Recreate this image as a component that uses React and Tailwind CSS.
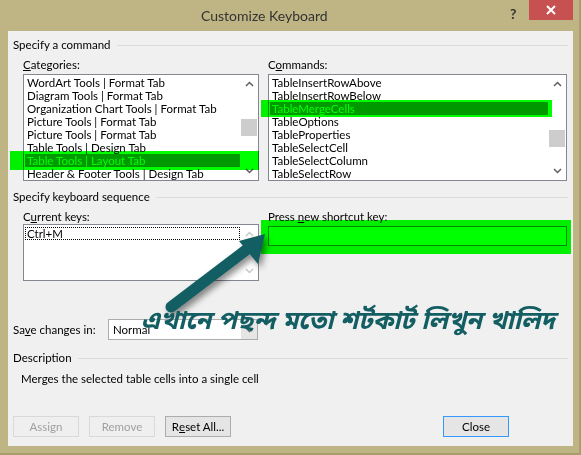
import React from 'react';

const font = { fontFamily: 'Lato, "Noto Sans", sans-serif' };

const categories = [
  'WordArt Tools | Format Tab',
  'Diagram Tools | Format Tab',
  'Organization Chart Tools | Format Tab',
  'Picture Tools | Format Tab',
  'Picture Tools | Format Tab',
  'Table Tools | Design Tab',
  'Table Tools | Layout Tab',
  'Header & Footer Tools | Design Tab',
];

const commands = [
  'TableInsertRowAbove',
  'TableInsertRowBelow',
  'TableMergeCells',
  'TableOptions',
  'TableProperties',
  'TableSelectCell',
  'TableSelectColumn',
  'TableSelectRow',
];

function Chevron({ up, disabled }) {
  return (
    <svg width="9" height="6" viewBox="0 0 9 6" className="block">
      <polyline
        points={up ? '1,5 4.5,1.5 8,5' : '1,1 4.5,4.5 8,1'}
        fill="none"
        stroke={disabled ? '#c8c8c8' : '#606060'}
        strokeWidth="1.5"
      />
    </svg>
  );
}

function Scrollbar({ thumbTop, disabled }) {
  return (
    <div className="flex w-[17px] flex-col items-center justify-between bg-white py-[6px]">
      <Chevron up disabled={disabled} />
      {thumbTop != null && (
        <div className="relative w-full flex-1">
          <div
            className="absolute left-0 h-[17px] w-[16px] bg-[#cdcdcd]"
            style={{ top: thumbTop }}
          />
        </div>
      )}
      <Chevron disabled={disabled} />
    </div>
  );
}

function ListBox({ items, selected, thumbTop, className }) {
  return (
    <div className={`flex h-[107px] border border-[#828790] bg-white ${className}`}>
      <div className="flex-1 overflow-hidden px-[1px] pt-[1px]">
        {items.map((t, i) => (
          <div
            key={i}
            className={`h-[13px] whitespace-nowrap pl-[2px] text-[11.5px] leading-[13px] ${
              i === selected ? 'bg-[#3399ff] text-white' : 'text-black'
            }`}
          >
            {t}
          </div>
        ))}
      </div>
      <Scrollbar thumbTop={thumbTop} />
    </div>
  );
}

function GroupHeader({ children }) {
  return (
    <div className="flex h-[14px] items-center gap-[6px] pl-[5px] pr-[5px]">
      <span className="whitespace-nowrap text-[11.5px] leading-[14px] text-black">{children}</span>
      <div className="h-px flex-1 bg-[#dcdcdc]" />
    </div>
  );
}

function Btn({ children, disabled, def }) {
  return (
    <div
      className={`flex h-[21px] w-[66px] items-center justify-center border text-[11.5px] ${
        disabled
          ? 'border-[#d9d9d9] bg-[#efefef] text-[#a0a0a0]'
          : def
          ? 'border-[#3399ff] bg-[#e5e5e5] text-black'
          : 'border-[#adadad] bg-[#e5e5e5] text-black'
      }`}
    >
      {children}
    </div>
  );
}

export default function App() {
  return (
    <div
      className="relative flex h-[455px] w-[581px] flex-col overflow-hidden border-r-2 border-b-2 border-[#a89e6c] bg-[#bfb483]"
      style={font}
    >
      {/* title bar */}
      <div className="relative flex h-[31px] items-center pl-[201px]">
        <span className="text-[14px] text-[#333333]">Customize Keyboard</span>
        <span className="absolute left-[510px] top-[3px] text-[14px] font-bold text-[#333]">?</span>
        <div className="absolute left-[529px] top-0 flex h-[20px] w-[44px] items-center justify-center bg-[#c75050]">
          <svg width="10" height="10" viewBox="0 0 10 10">
            <path d="M1 1 L9 9 M9 1 L1 9" stroke="white" strokeWidth="2" />
          </svg>
        </div>
      </div>

      {/* content */}
      <div className="ml-[8px] flex h-[415px] w-[565px] flex-col bg-[#f0f0f0] pt-[7px]">
        <GroupHeader>Specify a command</GroupHeader>

        <div className="mt-[6px] flex gap-[9px] pl-[15px]">
          <div className="flex w-[236px] flex-col">
            <div className="h-[14px] text-[11.5px] leading-[14px]">
              <u>C</u>ategories:
            </div>
            <ListBox className="mt-[2px]" items={categories} selected={6} thumbTop={32} />
          </div>
          <div className="flex w-[299px] flex-col">
            <div className="h-[14px] text-[11.5px] leading-[14px]">
              C<u>o</u>mmands:
            </div>
            <ListBox className="mt-[2px]" items={commands} selected={2} thumbTop={43} />
          </div>
        </div>

        <div className="mt-[9px]">
          <GroupHeader>Specify keyboard sequence</GroupHeader>
        </div>

        <div className="mt-[6px] flex gap-[9px] pl-[15px]">
          <div className="flex w-[236px] flex-col">
            <div className="h-[14px] text-[11.5px] leading-[14px]">
              C<u>u</u>rrent keys:
            </div>
            <div className="flex h-[57px] border border-[#828790] bg-white">
              <div className="flex-1 px-[1px] pt-[2px]">
                <div className="h-[13px] border border-dotted border-black pl-[1px] text-[11.5px] leading-[11px]">
                  Ctrl+M
                </div>
              </div>
              <Scrollbar disabled />
            </div>
          </div>
          <div className="flex w-[299px] flex-col">
            <div className="h-[14px] text-[11.5px] leading-[14px]">
              Press <u>n</u>ew shortcut key:
            </div>
            <div className="mt-[2px] h-[20px] border border-[#828790] bg-white" />
          </div>
        </div>

        <div className="mt-[38px] flex h-[21px] items-center pl-[5px]">
          <span className="w-[95px] whitespace-nowrap text-[11.5px]">
            Sa<u>v</u>e changes in:
          </span>
          <div className="flex h-[21px] w-[150px] border border-[#acacac] bg-white">
            <span className="flex-1 pl-[4px] text-[11.5px] leading-[19px]">Normal</span>
            <div className="flex w-[16px] items-center justify-center bg-[#e5e5e5]">
              <Chevron />
            </div>
          </div>
        </div>

        <div className="mt-[11px]">
          <GroupHeader>Description</GroupHeader>
        </div>
        <div className="mt-[7px] h-[14px] pl-[13px] text-[11.5px] leading-[14px]">
          Merges the selected table cells into a single cell
        </div>

        <div className="mt-[30px] flex items-center pl-[5px] pr-[64px]">
          <div className="flex gap-[10px]">
            <Btn disabled>Assign</Btn>
            <Btn disabled>Remove</Btn>
            <Btn>
              R<u>e</u>set All...
            </Btn>
          </div>
          <div className="flex-1" />
          <Btn def>Close</Btn>
        </div>
      </div>

      {/* highlighter marks */}
      <div className="pointer-events-none absolute left-[10px] top-[151px] h-[19px] w-[249px] bg-[#00ff00] mix-blend-multiply" />
      <div className="pointer-events-none absolute left-[261px] top-[100px] h-[17px] w-[291px] bg-[#00ff00] mix-blend-multiply" />
      <div className="pointer-events-none absolute left-[261px] top-[220px] h-[34px] w-[310px] bg-[#00ff00] mix-blend-multiply" />

      {/* annotation arrow */}
      <svg
        className="pointer-events-none absolute left-0 top-0"
        width="581"
        height="455"
        viewBox="0 0 581 455"
        style={{ filter: 'drop-shadow(3px 4px 3px rgba(0,0,0,0.45))' }}
      >
        <line x1="171" y1="307" x2="246" y2="250" stroke="#135e63" strokeWidth="11" strokeLinecap="round" />
        <polygon points="265,234 239,241 258,264" fill="#135e63" />
      </svg>

      <div
        className="pointer-events-none absolute left-[141px] top-[304px] whitespace-nowrap text-[25.5px] font-bold italic text-[#135e63]"
        style={{ fontFamily: '"Noto Sans Bengali", "Lohit Bengali", "Noto Sans", sans-serif' }}
      >
        এখানে পছন্দ মতো শর্টকার্ট লিখুন খালিদ
      </div>
    </div>
  );
}
